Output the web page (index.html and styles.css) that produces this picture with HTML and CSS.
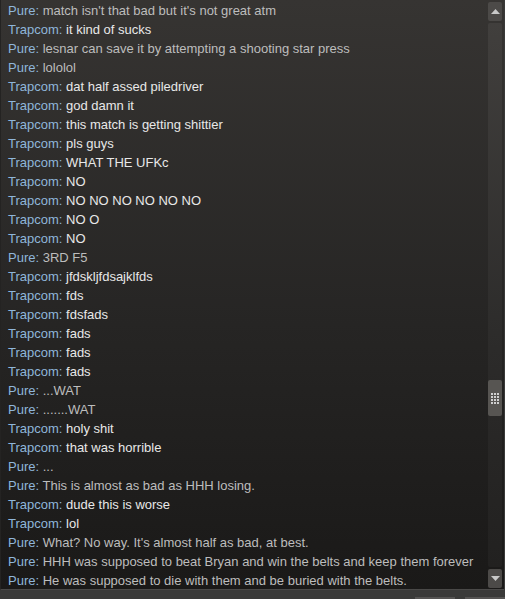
FILE: index.html
```html
<!DOCTYPE html>
<html lang="en">
<head>
    <meta charset="UTF-8">
    <title>Chat Log</title>
    <link rel="stylesheet" href="styles.css">
</head>
<body>
    <div class="chat-window">
        <div class="chat-log">
            <div class="line pure"><span class="name">Pure:</span> match isn't that bad but it's not great atm</div>
            <div class="line trap"><span class="name">Trapcom:</span> it kind of sucks</div>
            <div class="line pure"><span class="name">Pure:</span> lesnar can save it by attempting a shooting star press</div>
            <div class="line pure"><span class="name">Pure:</span> lololol</div>
            <div class="line trap"><span class="name">Trapcom:</span> dat half assed piledriver</div>
            <div class="line trap"><span class="name">Trapcom:</span> god damn it</div>
            <div class="line trap"><span class="name">Trapcom:</span> this match is getting shittier</div>
            <div class="line trap"><span class="name">Trapcom:</span> pls guys</div>
            <div class="line trap"><span class="name">Trapcom:</span> WHAT THE UFKc</div>
            <div class="line trap"><span class="name">Trapcom:</span> NO</div>
            <div class="line trap"><span class="name">Trapcom:</span> NO NO NO NO NO NO</div>
            <div class="line trap"><span class="name">Trapcom:</span> NO O</div>
            <div class="line trap"><span class="name">Trapcom:</span> NO</div>
            <div class="line pure"><span class="name">Pure:</span> 3RD F5</div>
            <div class="line trap"><span class="name">Trapcom:</span> jfdskljfdsajklfds</div>
            <div class="line trap"><span class="name">Trapcom:</span> fds</div>
            <div class="line trap"><span class="name">Trapcom:</span> fdsfads</div>
            <div class="line trap"><span class="name">Trapcom:</span> fads</div>
            <div class="line trap"><span class="name">Trapcom:</span> fads</div>
            <div class="line trap"><span class="name">Trapcom:</span> fads</div>
            <div class="line pure"><span class="name">Pure:</span> ...WAT</div>
            <div class="line pure"><span class="name">Pure:</span> .......WAT</div>
            <div class="line trap"><span class="name">Trapcom:</span> holy shit</div>
            <div class="line trap"><span class="name">Trapcom:</span> that was horrible</div>
            <div class="line pure"><span class="name">Pure:</span> ...</div>
            <div class="line pure"><span class="name">Pure:</span> This is almost as bad as HHH losing.</div>
            <div class="line trap"><span class="name">Trapcom:</span> dude this is worse</div>
            <div class="line trap"><span class="name">Trapcom:</span> lol</div>
            <div class="line pure"><span class="name">Pure:</span> What? No way. It's almost half as bad, at best.</div>
            <div class="line pure"><span class="name">Pure:</span> HHH was supposed to beat Bryan and win the belts and keep them forever</div>
            <div class="line pure"><span class="name">Pure:</span> He was supposed to die with them and be buried with the belts.</div>
        </div>
        <div class="scrollbar">
            <div class="scroll-btn">
                <svg width="9" height="5" viewBox="0 0 9 5"><polygon points="0,5 4.5,0 9,5" fill="#c9c9c9"/></svg>
            </div>
            <div class="scroll-track">
                <div class="scroll-thumb">
                    <div class="grip">
                        <span></span><span></span><span></span>
                        <span></span><span></span><span></span>
                        <span></span><span></span><span></span>
                        <span></span><span></span><span></span>
                    </div>
                </div>
            </div>
            <div class="scroll-btn">
                <svg width="9" height="5" viewBox="0 0 9 5"><polygon points="0,0 9,0 4.5,5" fill="#c9c9c9"/></svg>
            </div>
        </div>
    </div>
    <div class="bottom-bar">
        <div class="bar-tab tab-a"></div>
        <div class="bar-tab tab-b"></div>
    </div>
</body>
</html>
```

FILE: styles.css
```css
body {
    margin: 0;
    padding: 0;
    background-color: #3a3a39;
    font-family: "Liberation Sans", Arial, sans-serif;
    font-size: 13px;
    width: 505px;
    height: 599px;
    overflow: hidden;
}

.chat-window {
    display: flex;
    height: 590px;
    width: 504px;
    box-sizing: border-box;
    background: linear-gradient(to bottom, #363432 0%, #262524 55%, #1a1918 100%);
    border-left: 1px solid #242322;
    border-bottom: 1px solid #4a4948;
}

.chat-log {
    flex: 1;
    padding-left: 7px;
    padding-top: 1px;
    overflow: hidden;
}

.line {
    height: 19px;
    line-height: 19px;
    white-space: nowrap;
}

.name {
    color: #8fb6da;
}

.pure {
    color: #bdbdbd;
}

.trap {
    color: #e8e8e8;
}

.scrollbar {
    width: 14px;
    margin-right: 2px;
    padding-top: 2px;
    display: flex;
    flex-direction: column;
    gap: 2px;
    height: 586px;
}

.scroll-btn {
    height: 19px;
    background-color: #4c4a48;
    border-radius: 2px;
    display: flex;
    align-items: center;
    justify-content: center;
}

.scroll-track {
    flex: 1;
    background: linear-gradient(to bottom, #413f3d 0%, #2c2b2a 60%, #222120 100%);
    border-radius: 2px;
    padding-top: 357px;
}

.scroll-thumb {
    height: 36px;
    background-color: #575552;
    border-radius: 2px;
    display: flex;
    align-items: center;
    justify-content: center;
}

.grip {
    display: grid;
    grid-template-columns: repeat(3, 2px);
    gap: 1px;
}

.grip span {
    width: 2px;
    height: 2px;
    background-color: #cfcfcf;
}

.bottom-bar {
    height: 9px;
    position: relative;
}

.bar-tab {
    position: absolute;
    bottom: 0;
    height: 2px;
    background-color: #555453;
}

.tab-a {
    left: 415px;
    width: 40px;
}

.tab-b {
    left: 465px;
    width: 40px;
}
```
